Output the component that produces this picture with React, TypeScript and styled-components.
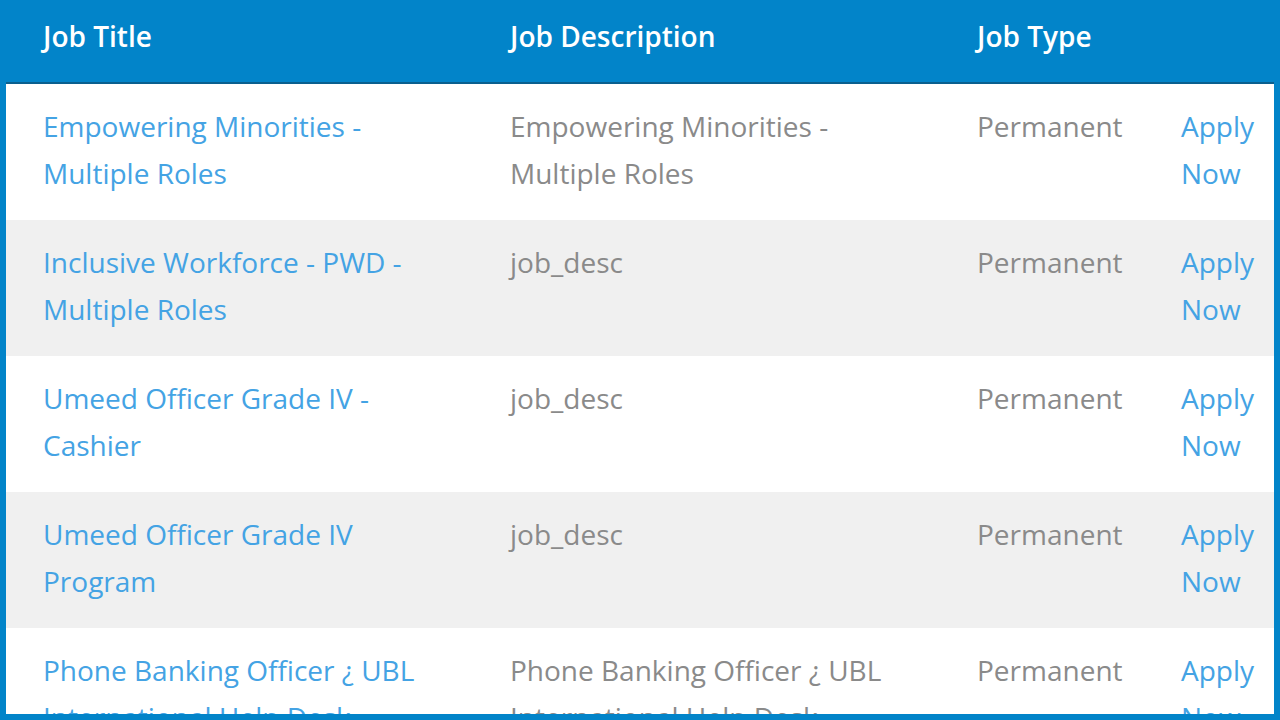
import React from "react";
import styled, { createGlobalStyle } from "styled-components";

const Global = createGlobalStyle`
  html, body { margin: 0; padding: 0; background: #0284c9; }
  body { font-family: "Open Sans", "Lato", sans-serif; }
`;

const Frame = styled.div`
  width: 1280px;
  height: 720px;
  box-sizing: border-box;
  border: 6px solid #0284c9;
  border-top: none;
  overflow: hidden;
  background: #ffffff;
`;

const Row = styled.div<{ $alt?: boolean }>`
  display: grid;
  grid-template-columns: 467px 467px 204px 130px;
  background: ${(p) => (p.$alt ? "#f0f0f0" : "#ffffff")};
  padding: 19px 0 23px;
`;

const HeaderRow = styled.div`
  display: grid;
  grid-template-columns: 467px 467px 204px 130px;
  background: #0284c9;
  height: 82px;
  align-items: center;
  border-bottom: 2px solid #0a5f8e;
  margin: 0 -6px;
  padding: 0 6px;
`;

const HeadCell = styled.div`
  padding-left: 37px;
  padding-bottom: 10px;
  color: #ffffff;
  font-weight: 600;
  font-size: 28px;
`;

const Cell = styled.div<{ $tone: "link" | "muted" }>`
  padding-left: 37px;
  padding-right: 20px;
  font-size: 28px;
  font-weight: 400;
  line-height: 47px;
  color: ${(p) => (p.$tone === "link" ? "#44a3e4" : "#8a8a8a")};
`;

const jobs = [
  { title: "Empowering Minorities - Multiple Roles", desc: "Empowering Minorities - Multiple Roles" },
  { title: "Inclusive Workforce - PWD - Multiple Roles", desc: "job_desc" },
  { title: "Umeed Officer Grade IV - Cashier", desc: "job_desc" },
  { title: "Umeed Officer Grade IV Program", desc: "job_desc" },
  { title: "Phone Banking Officer ¿ UBL International Help Desk", desc: "Phone Banking Officer ¿ UBL International Help Desk" },
];

export default function App() {
  return (
    <>
      <Global />
      <Frame>
        <HeaderRow>
          <HeadCell>Job Title</HeadCell>
          <HeadCell>Job Description</HeadCell>
          <HeadCell>Job Type</HeadCell>
          <HeadCell />
        </HeaderRow>
        {jobs.map((j, i) => (
          <Row key={i} $alt={i % 2 === 1}>
            <Cell $tone="link">{j.title}</Cell>
            <Cell $tone="muted">{j.desc}</Cell>
            <Cell $tone="muted">Permanent</Cell>
            <Cell $tone="link">Apply Now</Cell>
          </Row>
        ))}
      </Frame>
    </>
  );
}
